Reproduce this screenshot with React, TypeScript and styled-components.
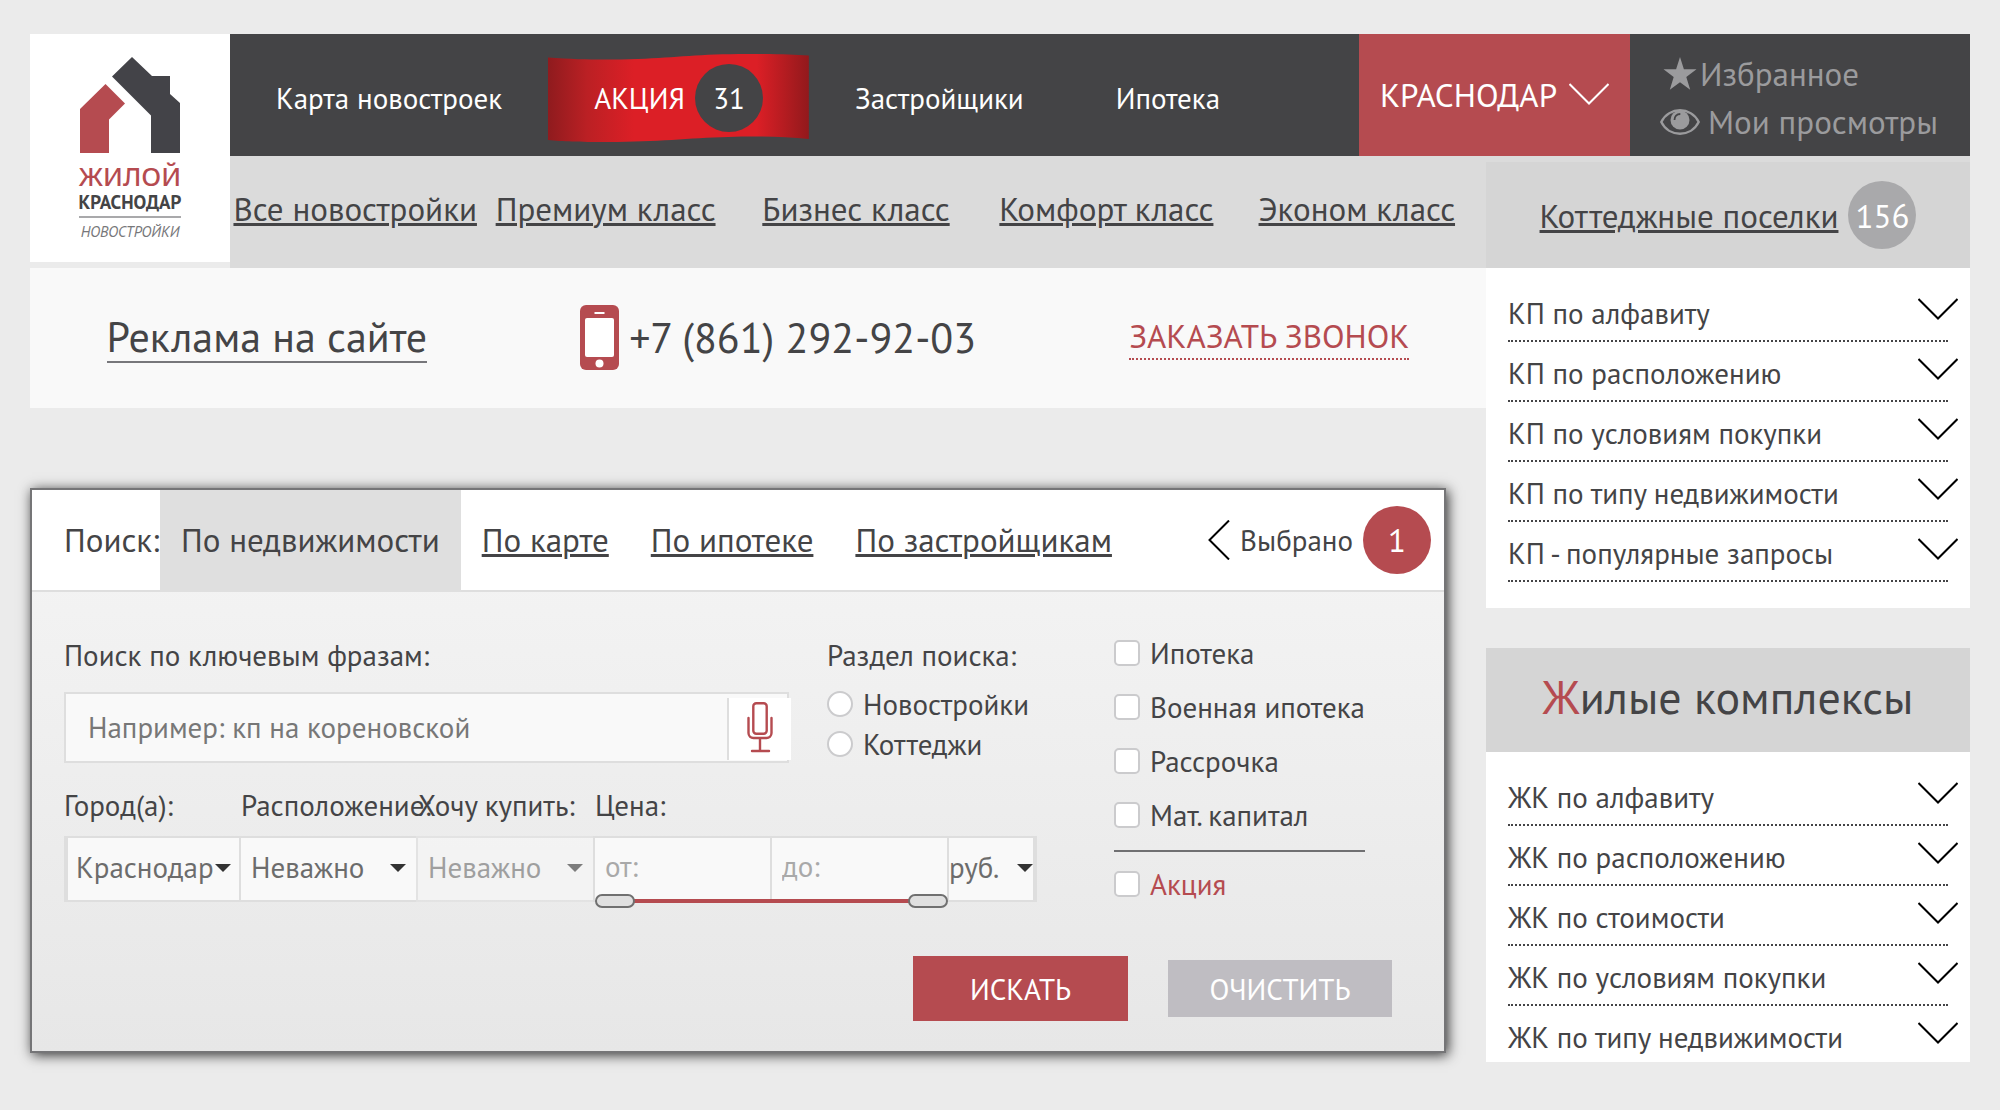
import React, { useState } from "react";
import styled, { createGlobalStyle } from "styled-components";

const color = {
  page: "#ebebeb",
  ink: "#444446",
  accent: "#b54b50",
  band: "#dbdbdb",
  title: "#d5d5d5",
  line: "#dedede",
  field: "#f9f9f9",
};

const size = { s: "29px", m: "33px", l: "42px", xl: "46px" };

const GlobalStyle = createGlobalStyle`
  *, *::before, *::after { box-sizing: border-box; }
  body {
    margin: 0;
    background: ${color.page};
    color: ${color.ink};
    font-family: "PT Sans", "Noto Sans", sans-serif;
    font-size: ${size.s};
  }
  a { color: inherit; text-decoration: none; }
  button, input, select { font: inherit; color: inherit; margin: 0; }
  button { cursor: pointer; }
  ul { list-style: none; margin: 0; padding: 0; }
`;

const Page = styled.div`
  padding: 34px 30px;
  white-space: nowrap;
`;

/* ---------- header ---------- */

const Header = styled.header`
  display: flex;
  align-items: flex-start;
`;

const Logo = styled.a`
  width: 200px;
  height: 228px;
  flex: none;
  display: flex;
  flex-direction: column;
  align-items: center;
  padding-top: 22px;
  background: #fff;
`;

const LogoMark = styled.svg`
  width: 102px;
  height: 98px;
  margin-bottom: 8px;
`;

const LogoName = styled.span`
  font: 500 26px/28px "Noto Sans", sans-serif;
  color: ${color.accent};
`;

const LogoCity = styled.span`
  padding: 2px 0 4px;
  border-bottom: 2px solid #a9a9ab;
  font-size: 19px;
  line-height: 20px;
  font-weight: 700;
`;

const LogoNote = styled.span`
  margin-top: 4px;
  font-size: 15px;
  line-height: 20px;
  font-style: italic;
  color: #77777a;
`;

const HeaderMain = styled.div`
  flex: 1;
  min-width: 0;
`;

const TopBar = styled.div`
  display: flex;
  height: 122px;
  background: ${color.ink};
  color: #fff;
`;

const TopNav = styled.nav`
  flex: 1;
  display: flex;
  align-items: center;
  padding-top: 5px;
`;

const TopLink = styled.a`
  position: relative;
  display: flex;
  align-items: center;
  gap: 10px;
  height: 88px;
  padding: 0 46px;
`;

const Ribbon = styled.svg`
  position: absolute;
  inset: 0;
  width: 100%;
  height: 100%;
`;

const Above = styled.span`
  position: relative;
`;

const Badge = styled.span<{ $bg: string; $large?: boolean }>`
  position: relative;
  display: flex;
  align-items: center;
  justify-content: center;
  width: 68px;
  height: 68px;
  border-radius: 50%;
  background: ${(p) => p.$bg};
  color: #fff;
  font-size: ${(p) => (p.$large ? size.m : size.s)};
`;

const CityButton = styled.button`
  display: flex;
  align-items: center;
  justify-content: center;
  gap: 12px;
  width: 271px;
  padding: 0 0 2px;
  border: 0;
  background: ${color.accent};
  color: #fff;
  font-size: ${size.m};
`;

const Personal = styled.div`
  display: flex;
  flex-direction: column;
  justify-content: center;
  width: 340px;
  padding: 6px 0 0 30px;
  color: #9b9b9d;
  font-size: ${size.m};
  line-height: 48px;
`;

const PersonalLink = styled.a<{ $gap: number }>`
  display: flex;
  align-items: center;
  gap: ${(p) => p.$gap}px;
`;

const SubBar = styled.div`
  display: flex;
  height: 112px;
  background: ${color.band};
`;

const SubNav = styled.nav`
  flex: 1;
  display: grid;
  grid-template-columns: repeat(5, 1fr);
  align-items: center;
  justify-items: center;
  padding: 0 4px 8px 0;
`;

const Underlined = styled.a`
  font-size: ${size.m};
  text-decoration: underline;
  text-decoration-thickness: 3px;
  text-underline-offset: 2px;
`;

const CottageTitle = styled.div`
  display: flex;
  align-items: center;
  justify-content: center;
  gap: 10px;
  width: 484px;
  margin-top: 6px;
  background: ${color.title};
`;

/* ---------- columns ---------- */

const Columns = styled.div`
  display: flex;
  align-items: flex-start;
`;

const Main = styled.main`
  flex: 1;
  min-width: 0;
`;

const Sidebar = styled.aside`
  width: 484px;
  display: flex;
  flex-direction: column;
`;

const ContactBar = styled.div`
  display: flex;
  align-items: center;
  justify-content: space-around;
  height: 140px;
  padding-bottom: 2px;
  background: #f9f9f9;
`;

const AdLink = styled.a`
  border-bottom: 2px solid #77777b;
  font-size: ${size.l};
  line-height: 49px;
`;

const PhoneLink = styled.a`
  display: flex;
  align-items: center;
  gap: 10px;
  font-size: ${size.l};
`;

const CallLink = styled.a`
  border-bottom: 2px dotted ${color.accent};
  color: ${color.accent};
  font-size: ${size.m};
  line-height: 44px;
`;

const MenuList = styled.ul<{ $bottom: number }>`
  padding: 14px 22px ${(p) => p.$bottom}px;
  background: #fff;
`;

const MenuItem = styled.li<{ $open?: boolean }>`
  border-bottom: ${(p) => (p.$open ? "0" : `2px dotted ${color.ink}`)};
`;

const MenuButton = styled.button<{ $short?: boolean }>`
  display: flex;
  align-items: flex-start;
  justify-content: space-between;
  width: 100%;
  height: ${(p) => (p.$short ? 56 : 58)}px;
  padding: 12px 0 0;
  border: 0;
  background: none;
  text-align: left;
  line-height: 38px;

  svg {
    flex: none;
    margin: 4px -10px 0 0;
  }
`;

const SectionTitle = styled.h2`
  display: flex;
  align-items: center;
  justify-content: center;
  height: 104px;
  margin: 40px 0 0;
  padding-bottom: 6px;
  background: ${color.title};
  font-size: ${size.xl};
  font-weight: 400;
`;

const FirstLetter = styled.span`
  color: ${color.accent};
`;

/* ---------- search panel ---------- */

const Panel = styled.form`
  margin: 80px 40px 0 0;
  border: 2px solid #757577;
  background: linear-gradient(#f5f5f5, #e7e7e7);
  box-shadow: 2px 2px 12px rgba(0, 0, 0, 0.8);
`;

const PanelHead = styled.div`
  display: flex;
  align-items: stretch;
  height: 102px;
  padding: 0 13px 0 32px;
  border-bottom: 2px solid ${color.line};
  background: #fff;
  font-size: ${size.m};
  line-height: 100px;
`;

const PanelTitle = styled.span`
  width: 96px;
`;

const Tab = styled.a<{ $active?: boolean }>`
  margin-bottom: -2px;
  padding: 0 21px;
  background: ${(p) => (p.$active ? "#dfdfdf" : "none")};
  text-decoration: ${(p) => (p.$active ? "none" : "underline")};
  text-decoration-thickness: 3px;
  text-underline-offset: 2px;
`;

const Selected = styled.a`
  display: flex;
  align-items: center;
  gap: 10px;
  margin-left: auto;
  font-size: ${size.s};
  line-height: 38px;
`;

const PanelBody = styled.div`
  display: flex;
  padding: 34px 32px 0;
`;

const Fields = styled.div`
  width: 973px;
  padding-top: 10px;
  line-height: 38px;
`;

const FieldRow = styled.div`
  display: flex;
  gap: 38px;
`;

const Caption = styled.label`
  display: block;
  margin-bottom: 18px;
`;

const KeywordField = styled.div`
  flex: none;
  width: 725px;
`;

const KeywordBox = styled.div`
  position: relative;
`;

const KeywordInput = styled.input`
  display: block;
  width: 100%;
  height: 71px;
  padding: 0 70px 2px 22px;
  border: 2px solid ${color.line};
  background: ${color.field};

  &::placeholder {
    color: #777;
    opacity: 1;
  }
`;

const MicButton = styled.button`
  position: absolute;
  top: 6px;
  right: -2px;
  display: flex;
  justify-content: center;
  width: 64px;
  height: 62px;
  padding: 4px 0 0;
  border: 0;
  border-left: 2px solid ${color.line};
  background: #fff;
`;

const Section = styled.fieldset`
  min-width: 0;
  margin: 0;
  padding: 0;
  border: 0;
`;

const SectionLegend = styled.legend`
  padding: 0 0 10px;
`;

const Option = styled.label<{ $tall?: boolean; $accent?: boolean }>`
  display: flex;
  align-items: center;
  gap: 10px;
  height: ${(p) => (p.$tall ? 54 : 40)}px;
  color: ${(p) => (p.$accent ? color.accent : "inherit")};
`;

const Tick = styled.input`
  appearance: none;
  flex: none;
  width: 26px;
  height: 26px;
  border: 2px solid #cbcbcd;
  border-radius: ${(p) => (p.type === "radio" ? "50%" : "5px")};
  background: #fff;

  &:checked {
    box-shadow: inset 0 0 0 5px #fff;
    background: ${color.accent};
  }
`;

const FilterRow = styled.div`
  display: grid;
  grid-template-columns: 175px repeat(4, 177px) 90px;
  margin-top: 22px;
`;

const Filter = styled.div<{ $span?: number }>`
  grid-column: span ${(p) => p.$span ?? 1};
  min-width: 0;
`;

const FilterCaption = styled.label<{ $first?: boolean }>`
  display: block;
  margin: 0 0 12px ${(p) => (p.$first ? 0 : 2)}px;
`;

const PriceRow = styled.div`
  position: relative;
  display: grid;
  grid-template-columns: 177px 177px 90px;
`;

const Cell = styled.div<{ $first?: boolean; $last?: boolean; $off?: boolean }>`
  position: relative;
  height: 66px;
  border: solid ${color.line};
  border-width: 2px ${(p) => (p.$last ? 4 : 0)}px 2px ${(p) => (p.$first ? 4 : 2)}px;
  background: ${color.field};
  opacity: ${(p) => (p.$off ? 0.6 : 1)};

  svg {
    position: absolute;
    top: 26px;
    right: ${(p) => (p.$last ? 0 : p.$first ? 8 : 10)}px;
    pointer-events: none;
  }
`;

const Select = styled.select<{ $indent: number }>`
  appearance: none;
  display: block;
  width: 100%;
  height: 100%;
  padding: 0 0 4px ${(p) => p.$indent}px;
  border: 0;
  border-radius: 0;
  background: none;
  color: #6c6c6c;
  opacity: 1;
`;

const PriceInput = styled.input`
  display: block;
  width: 100%;
  height: 100%;
  padding: 0 10px 6px;
  border: 0;
  background: none;

  &::placeholder {
    color: #a9a9a9;
    opacity: 1;
  }
`;

const Slider = styled.div`
  position: absolute;
  left: 2px;
  right: 89px;
  bottom: -6px;
  height: 14px;

  &::before {
    content: "";
    position: absolute;
    inset: 5px 20px;
    background: ${color.accent};
  }
`;

const Range = styled.input`
  appearance: none;
  position: absolute;
  inset: 0;
  width: 100%;
  height: 14px;
  background: none;
  pointer-events: none;

  &::-webkit-slider-thumb {
    appearance: none;
    width: 40px;
    height: 14px;
    border: 2px solid #707070;
    border-radius: 7px;
    background: #e0e0e0;
    pointer-events: auto;
  }
`;

const Checks = styled.div`
  margin-left: 77px;
`;

const Rule = styled.hr`
  height: 2px;
  margin: 8px 0 5px;
  border: 0;
  background: #707072;
`;

const Actions = styled.div`
  display: flex;
  align-items: center;
  justify-content: flex-end;
  gap: 40px;
  padding: 45px 52px 30px;
`;

const Action = styled.button<{ $primary?: boolean }>`
  width: ${(p) => (p.$primary ? 215 : 224)}px;
  height: ${(p) => (p.$primary ? 65 : 57)}px;
  padding: 0;
  border: 0;
  background: ${(p) => (p.$primary ? color.accent : "#bfbdc2")};
  color: #fff;
  font-weight: 400;
`;

/* ---------- drawings ---------- */

const ChevronDown = ({ stroke = "#000" }: { stroke?: string }) => (
  <svg width="40" height="22" viewBox="0 0 40 22" fill="none" stroke={stroke} strokeWidth="2" aria-hidden="true">
    <path d="M0.5 1 20 20.5 39.5 1" />
  </svg>
);

const ChevronLeft = () => (
  <svg width="22" height="40" viewBox="0 0 22 40" fill="none" stroke="#000" strokeWidth="2" aria-hidden="true">
    <path d="M21 0.5 1.5 20 21 39.5" />
  </svg>
);

const Caret = () => (
  <svg width="16" height="8" viewBox="0 0 16 8" fill="#333" aria-hidden="true">
    <path d="M0 0h16L8 8z" />
  </svg>
);

const Star = () => (
  <svg width="40" height="34" viewBox="0 0 40 34" fill="#9b9b9d" aria-hidden="true">
    <path d="M20 0l3.900 12.200h12.600l-10.200 7.800 3.900 12.800L20 25.200 9.800 32.800l3.900-12.800L3.500 12.200h12.600z" />
  </svg>
);

const Eye = () => (
  <svg width="40" height="26" viewBox="0 0 40 26" fill="none" aria-hidden="true">
    <path d="M1.300 13C9-2.600 31-2.600 38.700 13 31 28.600 9 28.600 1.300 13z" stroke="#9b9b9d" strokeWidth="2.400" />
    <circle cx="20" cy="11" r="9.500" fill="#9b9b9d" />
    <path d="M14.500 11c0-3.600 2.200-6 5.800-6" stroke={color.ink} strokeWidth="1.800" />
  </svg>
);

const Phone = () => (
  <svg width="39" height="65" viewBox="0 0 39 65" aria-hidden="true">
    <rect width="39" height="65" rx="6" fill={color.accent} />
    <rect x="5" y="13" width="29" height="39" rx="2" fill="#fff" />
    <rect x="14.500" y="7" width="10" height="2" fill="#fff" />
    <circle cx="19.500" cy="58.500" r="4" fill="#fff" />
  </svg>
);

const Mic = () => (
  <svg width="26" height="51" viewBox="0 0 26 51" fill="none" stroke={color.accent} strokeWidth="2.400" strokeLinecap="round" aria-hidden="true">
    <rect x="6.300" y="1.200" width="13.400" height="30.500" rx="3" />
    <path d="M1.500 16v15a5 5 0 0 0 5 5h13a5 5 0 0 0 5-5V16M13 36v13M5 49h17" />
  </svg>
);

/* ---------- data ---------- */

const classes = ["Все новостройки", "Премиум класс", "Бизнес класс", "Комфорт класс", "Эконом класс"];

const cottageMenu = [
  "КП по алфавиту",
  "КП по расположению",
  "КП по условиям покупки",
  "КП по типу недвижимости",
  "КП - популярные запросы",
];

const complexMenu = [
  "ЖК по алфавиту",
  "ЖК по расположению",
  "ЖК по стоимости",
  "ЖК по условиям покупки",
  "ЖК по типу недвижимости",
];

const checks = ["Ипотека", "Военная ипотека", "Рассрочка", "Мат. капитал"];

function Menu({ items, cut = false }: { items: string[]; cut?: boolean }) {
  return (
    <MenuList $bottom={cut ? 0 : 26}>
      {items.map((item, i) => {
        const last = cut && i === items.length - 1;
        return (
          <MenuItem key={item} $open={last}>
            <MenuButton type="button" $short={last}>
              {item}
              <ChevronDown />
            </MenuButton>
          </MenuItem>
        );
      })}
    </MenuList>
  );
}

export default function App() {
  const [from, setFrom] = useState(0);
  const [to, setTo] = useState(100);

  return (
    <Page>
      <GlobalStyle />
      <Header>
        <Logo href="#">
          <LogoMark viewBox="0 0 102 98" aria-hidden="true">
            <path fill={color.accent} d="M1 53 26.500 28 46 47.500 30 63.500V97H1z" />
            <path fill="#434348" d="M53 1 33 20.500 72 59.500V97h29V47l-10-9V20H73z" />
          </LogoMark>
          <LogoName>ЖИЛОЙ</LogoName>
          <LogoCity>КРАСНОДАР</LogoCity>
          <LogoNote>НОВОСТРОЙКИ</LogoNote>
        </Logo>
        <HeaderMain>
          <TopBar>
            <TopNav>
              <TopLink href="#">Карта новостроек</TopLink>
              <TopLink href="#">
                <Ribbon viewBox="0 0 261 88" preserveAspectRatio="none" aria-hidden="true">
                  <defs>
                    <linearGradient id="ribbon">
                      <stop offset="0" stopColor="#8f1b1e" />
                      <stop offset="0.15" stopColor="#bb2024" />
                      <stop offset="0.33" stopColor="#dc1f26" />
                      <stop offset="0.8" stopColor="#dc1f26" />
                      <stop offset="1" stopColor="#92191c" />
                    </linearGradient>
                  </defs>
                  <path
                    fill="url(#ribbon)"
                    d="M0 3.500C35 6 60 6 90 5 130 3.500 150 0 200 0 230 0 245 0.500 261 1.500V85C235 82.500 210 82 180 83 140 84 110 88 60 88 30 88 15 87.500 0 86z"
                  />
                </Ribbon>
                <Above>АКЦИЯ</Above>
                <Badge $bg={color.ink}>31</Badge>
              </TopLink>
              <TopLink href="#">Застройщики</TopLink>
              <TopLink href="#">Ипотека</TopLink>
            </TopNav>
            <CityButton type="button">
              КРАСНОДАР
              <ChevronDown stroke="#fff" />
            </CityButton>
            <Personal>
              <PersonalLink href="#" $gap={0}>
                <Star />
                Избранное
              </PersonalLink>
              <PersonalLink href="#" $gap={8}>
                <Eye />
                Мои просмотры
              </PersonalLink>
            </Personal>
          </TopBar>
          <SubBar>
            <SubNav>
              {classes.map((name) => (
                <Underlined key={name} href="#">
                  {name}
                </Underlined>
              ))}
            </SubNav>
            <CottageTitle>
              <Underlined href="#">Коттеджные поселки</Underlined>
              <Badge $bg="#a9a9ab" $large>
                156
              </Badge>
            </CottageTitle>
          </SubBar>
        </HeaderMain>
      </Header>

      <Columns>
        <Main>
          <ContactBar>
            <AdLink href="#">Реклама на сайте</AdLink>
            <PhoneLink href="tel:+78612929203">
              <Phone />
              +7 (861) 292-92-03
            </PhoneLink>
            <CallLink href="#">ЗАКАЗАТЬ ЗВОНОК</CallLink>
          </ContactBar>

          <Panel onSubmit={(e) => e.preventDefault()}>
            <PanelHead>
              <PanelTitle>Поиск:</PanelTitle>
              <Tab href="#" $active>
                По недвижимости
              </Tab>
              <Tab href="#">По карте</Tab>
              <Tab href="#">По ипотеке</Tab>
              <Tab href="#">По застройщикам</Tab>
              <Selected href="#">
                <ChevronLeft />
                Выбрано
                <Badge $bg={color.accent} $large>
                  1
                </Badge>
              </Selected>
            </PanelHead>

            <PanelBody>
              <Fields>
                <FieldRow>
                  <KeywordField>
                    <Caption htmlFor="keyword">Поиск по ключевым фразам:</Caption>
                    <KeywordBox>
                      <KeywordInput id="keyword" placeholder="Например: кп на кореновской" />
                      <MicButton type="button" aria-label="Голосовой ввод">
                        <Mic />
                      </MicButton>
                    </KeywordBox>
                  </KeywordField>
                  <Section>
                    <SectionLegend>Раздел поиска:</SectionLegend>
                    {["Новостройки", "Коттеджи"].map((name) => (
                      <Option key={name}>
                        <Tick type="radio" name="section" />
                        {name}
                      </Option>
                    ))}
                  </Section>
                </FieldRow>

                <FilterRow>
                  <Filter>
                    <FilterCaption htmlFor="city" $first>
                      Город(а):
                    </FilterCaption>
                    <Cell $first>
                      <Select id="city" $indent={8}>
                        <option>Краснодар</option>
                      </Select>
                      <Caret />
                    </Cell>
                  </Filter>
                  <Filter>
                    <FilterCaption htmlFor="place">Расположение:</FilterCaption>
                    <Cell>
                      <Select id="place" $indent={10}>
                        <option>Неважно</option>
                      </Select>
                      <Caret />
                    </Cell>
                  </Filter>
                  <Filter>
                    <FilterCaption htmlFor="kind">Хочу купить:</FilterCaption>
                    <Cell $off>
                      <Select id="kind" $indent={10} disabled>
                        <option>Неважно</option>
                      </Select>
                      <Caret />
                    </Cell>
                  </Filter>
                  <Filter $span={3}>
                    <FilterCaption htmlFor="price-from">Цена:</FilterCaption>
                    <PriceRow>
                      <Cell>
                        <PriceInput id="price-from" placeholder="от:" />
                      </Cell>
                      <Cell>
                        <PriceInput placeholder="до:" aria-label="Цена до" />
                      </Cell>
                      <Cell $last>
                        <Select $indent={0} aria-label="Валюта">
                          <option>руб.</option>
                        </Select>
                        <Caret />
                      </Cell>
                      <Slider>
                        <Range
                          type="range"
                          aria-label="Минимальная цена"
                          value={from}
                          onChange={(e) => setFrom(Math.min(Number(e.target.value), to))}
                        />
                        <Range
                          type="range"
                          aria-label="Максимальная цена"
                          value={to}
                          onChange={(e) => setTo(Math.max(Number(e.target.value), from))}
                        />
                      </Slider>
                    </PriceRow>
                  </Filter>
                </FilterRow>
              </Fields>

              <Checks>
                {checks.map((name) => (
                  <Option key={name} $tall>
                    <Tick type="checkbox" />
                    {name}
                  </Option>
                ))}
                <Rule />
                <Option $tall $accent>
                  <Tick type="checkbox" />
                  Акция
                </Option>
              </Checks>
            </PanelBody>

            <Actions>
              <Action type="submit" $primary>
                ИСКАТЬ
              </Action>
              <Action type="reset">ОЧИСТИТЬ</Action>
            </Actions>
          </Panel>
        </Main>

        <Sidebar>
          <Menu items={cottageMenu} />
          <SectionTitle>
            <span>
              <FirstLetter>Ж</FirstLetter>илые комплексы
            </span>
          </SectionTitle>
          <Menu items={complexMenu} cut />
        </Sidebar>
      </Columns>
    </Page>
  );
}
